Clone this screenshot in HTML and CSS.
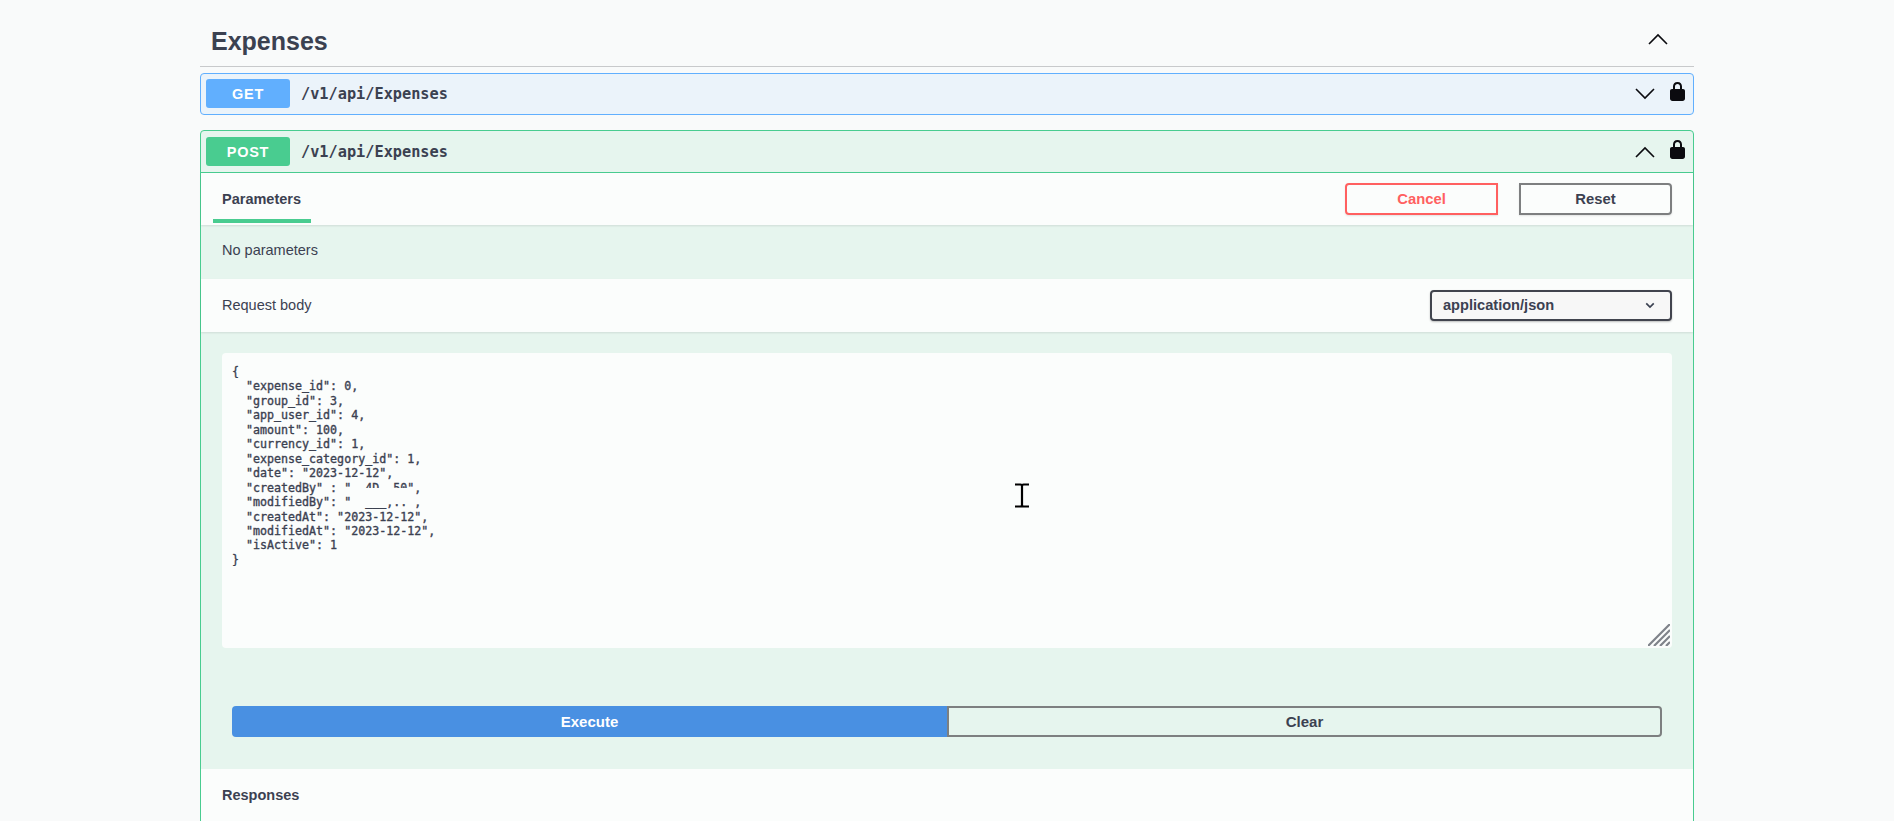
FILE: index.html
```html
<!DOCTYPE html>
<html lang="en">
<head>
<meta charset="utf-8">
<title>Expenses</title>
<link rel="stylesheet" href="styles.css">
</head>
<body>
<main class="wrapper">
  <header class="tag-header">
    <h3 class="tag-title">Expenses</h3>
    <svg class="chevron chevron-tag" viewBox="0 0 20 12"><path d="M1 11 L10 2 L19 11"/></svg>
  </header>

  <section class="opblock opblock-get">
    <div class="summary">
      <span class="method">GET</span>
      <span class="path">/v1/api/Expenses</span>
      <svg class="chevron" viewBox="0 0 20 12"><path d="M1 1 L10 10 L19 1"/></svg>
      <svg class="lock" viewBox="0 0 15 19"><path d="M7.5 0C4.6 0 3 2 3 4.6V7H2C.8 7 0 7.8 0 9v7.500C0 18 1 19 2.500 19h10c1.500 0 2.500-1 2.500-2.500V9C15 7.800 14.200 7 13 7H12V4.600C12 2 10.400 0 7.500 0zM5 7V4.600C5 3 6 2 7.500 2s2.500 1 2.500 2.600V7z" fill-rule="evenodd"/></svg>
    </div>
  </section>

  <section class="opblock opblock-post">
    <div class="summary">
      <span class="method">POST</span>
      <span class="path">/v1/api/Expenses</span>
      <svg class="chevron" viewBox="0 0 20 12"><path d="M1 11 L10 2 L19 11"/></svg>
      <svg class="lock" viewBox="0 0 15 19"><path d="M7.5 0C4.6 0 3 2 3 4.6V7H2C.8 7 0 7.8 0 9v7.500C0 18 1 19 2.500 19h10c1.500 0 2.500-1 2.500-2.500V9C15 7.800 14.200 7 13 7H12V4.600C12 2 10.400 0 7.500 0zM5 7V4.600C5 3 6 2 7.500 2s2.500 1 2.500 2.600V7z" fill-rule="evenodd"/></svg>
    </div>

    <div class="bar bar-tabs">
      <div class="tab">Parameters</div>
      <div class="actions">
        <button class="btn btn-cancel">Cancel</button>
        <button class="btn btn-reset">Reset</button>
      </div>
    </div>

    <div class="no-params">No parameters</div>

    <div class="bar bar-request">
      <span class="request-label">Request body</span>
      <div class="select">
        <span>application/json</span>
        <svg class="select-arrow" viewBox="0 0 12 8"><path d="M1.500 1.500 L6 6 L10.500 1.500"/></svg>
      </div>
    </div>

    <div class="body-section">
      <div class="editor">
<pre class="code">{
  "expense_id": 0,
  "group_id": 3,
  "app_user_id": 4,
  "amount": 100,
  "currency_id": 1,
  "expense_category_id": 1,
  "date": "2023-12-12",
  "createdBy" : "  4D  50",
  "modifiedBy": "  ___,..",
  "createdAt": "2023-12-12",
  "modifiedAt": "2023-12-12",
  "isActive": 1
}</pre>
        <span class="redact redact-main"></span>
        <span class="redact redact-top"></span>
        <svg class="resize-handle" viewBox="0 0 22 22"><path d="M0 22 L22 0 M6 22 L22 6 M12 22 L22 12 M18 22 L22 18"/></svg>
      </div>
      <div class="execute-row">
        <button class="exec exec-run">Execute</button>
        <button class="exec exec-clear">Clear</button>
      </div>
    </div>

    <div class="responses">Responses</div>
  </section>
</main>
<svg class="ibeam" viewBox="0 0 14 25"><path d="M0 1.500 H5.500 Q7 1.500 7 3 V22 Q7 23.500 5.500 23.500 H0 M14 1.500 H8.500 Q7 1.500 7 3 M7 22 Q7 23.500 8.500 23.500 H14"/></svg>
</body>
</html>
```

FILE: styles.css
```css
* { box-sizing: border-box; }
html, body { margin: 0; height: 100%; overflow: hidden; }
body {
  background: #f9fafa;
  color: #3b4151;
  font-family: "Liberation Sans", Arial, sans-serif;
  position: relative;
}
.wrapper { width: 1494px; margin: 0 auto; }

.tag-header {
  height: 67px;
  border-bottom: 1px solid #c8c9cb;
  display: flex;
  align-items: center;
  justify-content: space-between;
  padding: 15px 26px 0 11px;
  margin-bottom: 6px;
}
.tag-title { margin: 0; font-size: 25px; font-weight: 700; line-height: 30px; }

.chevron { width: 20px; height: 12px; fill: none; stroke: #0b0b0f; stroke-width: 1.600; flex: none; }
.chevron-tag { margin-top: -3px; }

.opblock { border: 1px solid; border-radius: 4px; margin-bottom: 15px; }
.opblock-get { background: #ebf3fa; border-color: #61affe; }
.opblock-post { background: #e6f5ee; border-color: #49cc90; }

.summary { height: 40px; display: flex; align-items: center; padding: 0 8px 1px 5px; }
.opblock-post .summary { border-bottom: 1px solid #49cc90; height: 42px; padding-bottom: 0; }
.method {
  width: 84px; height: 29px;
  display: flex; align-items: center; justify-content: center;
  border-radius: 3px;
  color: #fff;
  font-size: 14.500px; font-weight: 700;
  letter-spacing: .7px;
}
.opblock-get .method { background: #61affe; }
.opblock-post .method { background: #49cc90; }
.path {
  margin-left: 11px;
  flex: 1;
  font-family: "DejaVu Sans Mono", monospace;
  font-size: 15.250px;
  font-weight: 700;
}
.lock { width: 15px; height: 19px; fill: #0b0b0f; margin: 0 0 4px 15px; flex: none; }

.bar { display: flex; align-items: center; justify-content: space-between; background: #fbfdfc; box-shadow: 0 1px 2px rgba(0,0,0,.1); position: relative; }
.bar-tabs { height: 52px; padding: 0 21px 0 12px; }
.tab {
  align-self: flex-end;
  width: 98px; height: 50px;
  margin-bottom: 2px;
  padding: 6px 0 0 9px;
  display: flex; align-items: center;
  border-bottom: 4px solid #49cc90;
  font-size: 14.500px; font-weight: 700;
}
.actions { display: flex; gap: 21px; }
.btn {
  width: 153px; height: 32px;
  background: transparent;
  border: 2px solid #7d7f80;
  font-family: inherit; font-size: 14.800px; font-weight: 700;
  color: #3b4151;
  box-shadow: 0 1px 2px rgba(0,0,0,.1);
  padding: 0;
}
.btn-cancel { border-color: #ff6060; color: #ff6060; border-radius: 4px 0 0 4px; }
.btn-reset { border-radius: 0 4px 4px 0; }

.no-params { height: 54px; padding: 0 0 4px 21px; display: flex; align-items: center; font-size: 14.500px; }

.bar-request { height: 53px; padding: 0 21px; }
.request-label { font-size: 14.500px; margin-top: -2px; }
.select {
  width: 242px; height: 31px;
  display: flex; align-items: center; justify-content: space-between;
  padding: 0 15px 2px 11px;
  background: #f7f7f7;
  border: 2px solid #41444e;
  border-radius: 4px;
  box-shadow: 0 1px 2px rgba(0,0,0,.25);
  font-size: 14.600px; font-weight: 700;
}
.select-arrow { width: 10px; height: 7px; fill: none; stroke: #3b4151; stroke-width: 2; margin-top: 2px; }

.body-section { padding: 21px 21px 32px; }
.editor { position: relative; height: 295px; background: #fbfdfc; border-radius: 4px; }
.code {
  margin: 0;
  padding: 12px 10px 0;
  font-family: "DejaVu Sans Mono", monospace;
  font-size: 11.650px;
  font-weight: 400;
  -webkit-text-stroke: .35px #3b4151;
  line-height: 14.450px;
  color: #3b4151;
}
.redact { position: absolute; background: #fbfdfc; }
.redact-main { left: 129px; top: 135px; width: 63px; height: 15px; }
.redact-top { left: 129px; top: 124px; width: 14px; height: 12px; }
.resize-handle { position: absolute; right: 2px; bottom: 2px; width: 22px; height: 22px; fill: none; stroke: #7f838a; stroke-width: 2.200; }

.execute-row { display: flex; margin: 58px 10px 0; }
.exec {
  flex: 0 0 50%; height: 31px; padding: 0;
  font-family: inherit; font-size: 15px; font-weight: 700;
}
.exec-run { background: #4990e2; color: #fff; border: none; border-radius: 4px 0 0 4px; }
.exec-clear { background: transparent; color: #3b4151; border: 2px solid #7d7f80; border-radius: 0 4px 4px 0; }

.responses { height: 200px; background: #fbfdfc; padding: 18px 21px 0; font-size: 14.500px; font-weight: 700; }

.ibeam { position: absolute; left: 1015px; top: 483px; width: 14px; height: 25px; fill: none; stroke: #000; stroke-width: 2.200; }
```
